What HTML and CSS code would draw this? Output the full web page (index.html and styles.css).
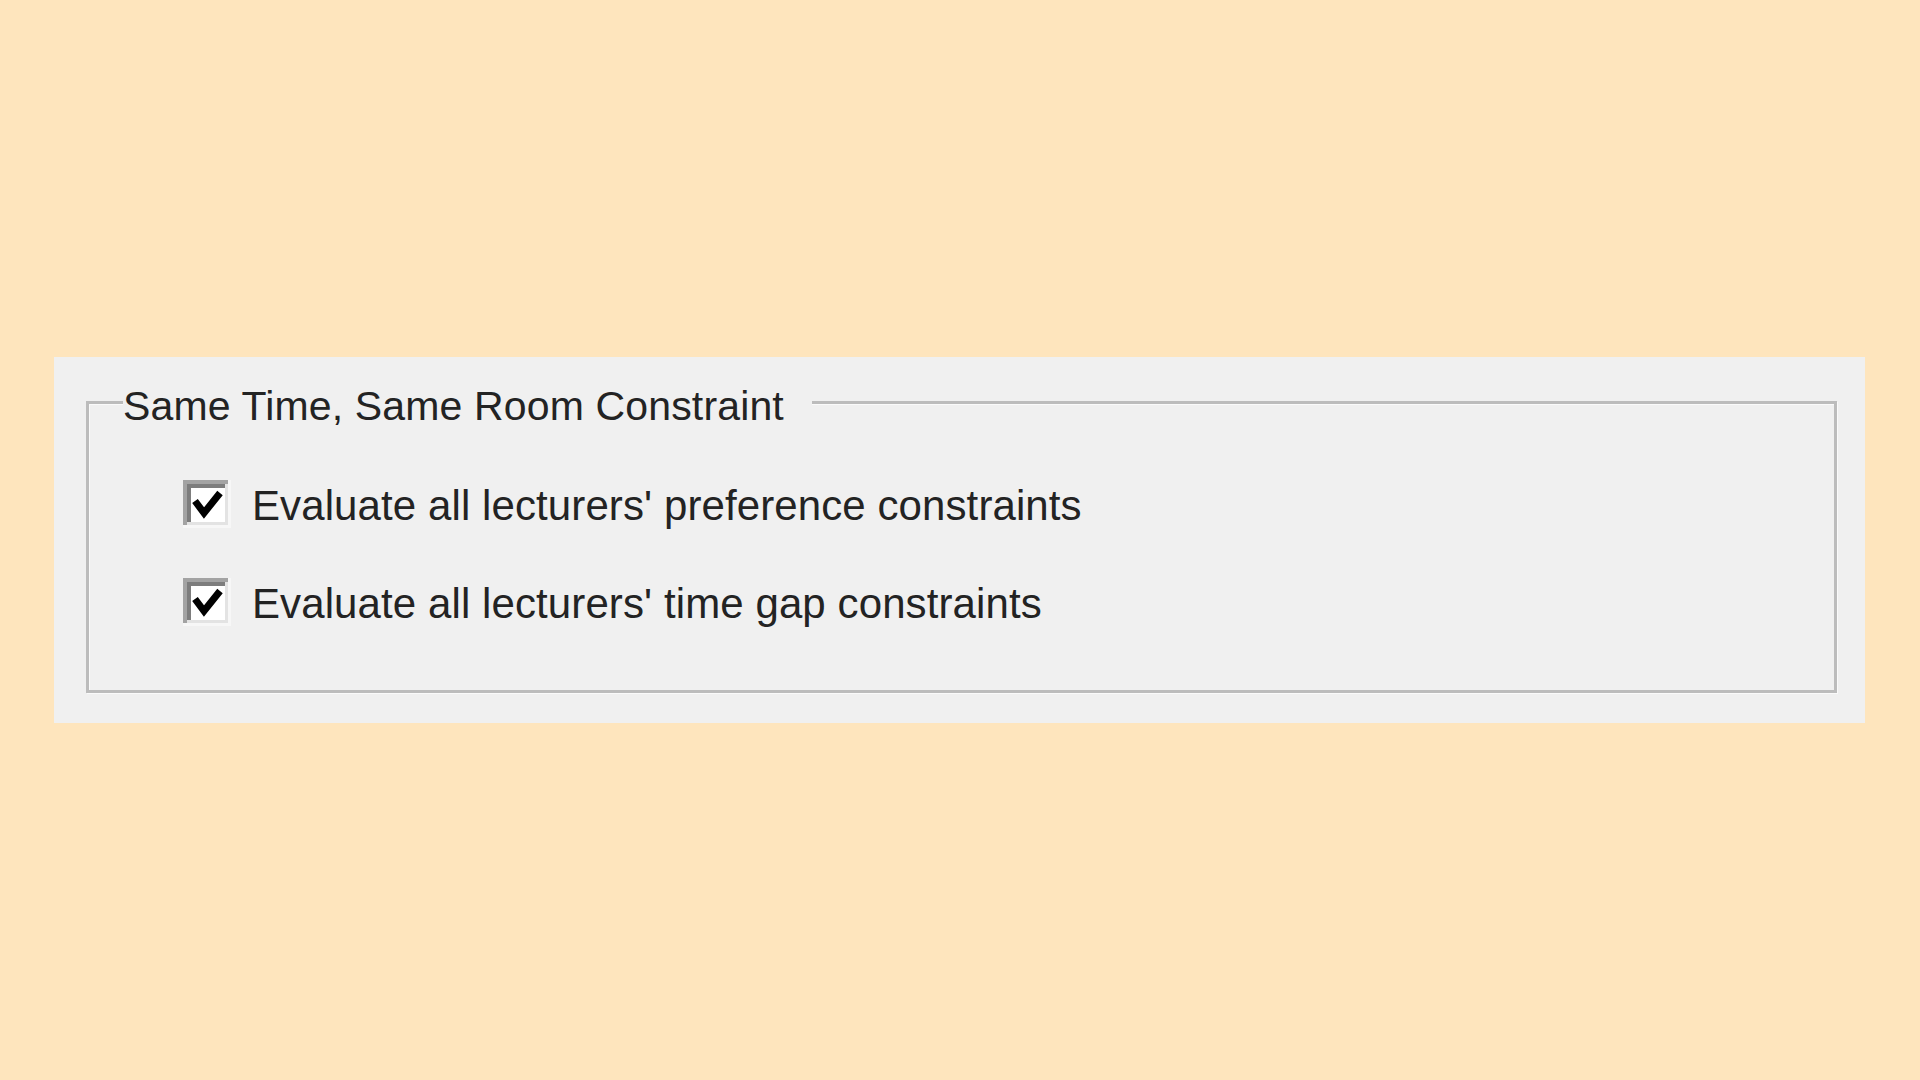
FILE: index.html
```html
<!DOCTYPE html>
<html lang="en">
  <head>
    <meta charset="UTF-8" />
    <meta name="viewport" content="width=device-width, initial-scale=1.0" />
    <title>Same Time, Same Room Constraint</title>

    <link rel="stylesheet" href="styles.css">
  </head>
  <body>
    <div class="panel">
      <fieldset class="group">
        <legend class="group-title">Same Time, Same Room Constraint</legend>

        <div class="options">
          <label class="option">
            <svg class="check" width="48" height="48" viewBox="0 0 48 48">
              <rect x="0" y="0" width="48" height="48" fill="#f7f7f7" />
              <rect x="0" y="0" width="45" height="45" fill="#a3a3a3" />
              <rect x="4" y="4" width="41" height="41" fill="#e3e3e3" />
              <rect x="4" y="4" width="38" height="38" fill="#7d7d7d" />
              <rect x="8" y="8" width="34" height="34" fill="#ffffff" />
              <polyline points="12,21 21,33 37,13" fill="none" stroke="#000" stroke-width="7" />
            </svg>
            <span class="option-text">Evaluate all lecturers' preference constraints</span>
          </label>

          <label class="option">
            <svg class="check" width="48" height="48" viewBox="0 0 48 48">
              <rect x="0" y="0" width="48" height="48" fill="#f7f7f7" />
              <rect x="0" y="0" width="45" height="45" fill="#a3a3a3" />
              <rect x="4" y="4" width="41" height="41" fill="#e3e3e3" />
              <rect x="4" y="4" width="38" height="38" fill="#7d7d7d" />
              <rect x="8" y="8" width="34" height="34" fill="#ffffff" />
              <polyline points="12,21 21,33 37,13" fill="none" stroke="#000" stroke-width="7" />
            </svg>
            <span class="option-text">Evaluate all lecturers' time gap constraints</span>
          </label>
        </div>
      </fieldset>
    </div>
  </body>
</html>
```

FILE: styles.css
```css
* {
  margin: 0;
  padding: 0;
  box-sizing: border-box;
}

body {
  font-family: 'Liberation Sans', Arial, sans-serif;
  background-color: #fee5bd;
  color: #232323;
  height: 100vh;
  overflow: hidden;
}

.panel {
  margin: 357px 0 0 54px;
  width: 1811px;
  height: 366px;
  padding: 18px 28px 30px 32px;
  background-color: #f0f0f0;
}

.group {
  height: 100%;
  border: 3px solid #bcbcbc;
  box-shadow: 1px 1px 0 #fafafa, inset 1px 1px 0 #fafafa;
  padding: 50px 0 0 34px;
}

.group-title {
  padding: 7px 28px 0 0;
  font-size: 41px;
  letter-spacing: 0.15px;
  line-height: 48px;
  background-color: #f0f0f0;
}

.options {
  margin-left: 60px;
  display: flex;
  flex-direction: column;
  gap: 50px;
}

.option {
  display: flex;
  align-items: center;
  gap: 21px;
  height: 48px;
  font-size: 42px;
  letter-spacing: 0.1px;
  user-select: none;

  & .check {
    display: block;
    flex-shrink: 0;
  }

  & .option-text {
    padding-top: 4px;
  }
}
```
